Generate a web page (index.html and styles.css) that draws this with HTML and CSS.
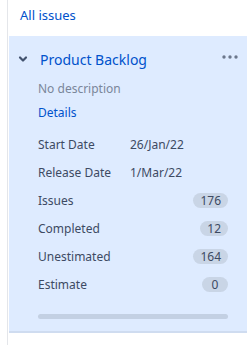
FILE: index.html
```html
<!DOCTYPE html>
<html lang="en">
<head>
  <meta charset="UTF-8" />
  <title>Backlog</title>
  <link rel="stylesheet" href="styles.css">
</head>
<body>
  <div class="sidebar">
    <div class="all-issues">All issues</div>

    <div class="version">
      <div class="version-head">
        <svg class="chevron" width="10" height="10" viewBox="0 0 10 10">
          <path d="M2 3.5 L5 6.5 L8 3.5" fill="none" stroke="#42526e" stroke-width="2.2" stroke-linecap="round" stroke-linejoin="round"/>
        </svg>
        <span class="version-name">Product Backlog</span>
        <svg class="more" width="16" height="4" viewBox="0 0 16 4">
          <circle cx="2" cy="2" r="1.7" fill="#6b778c"/>
          <circle cx="8" cy="2" r="1.7" fill="#6b778c"/>
          <circle cx="14" cy="2" r="1.7" fill="#6b778c"/>
        </svg>
      </div>

      <div class="version-body">
        <div class="desc">No description</div>
        <div class="details">Details</div>

        <div class="stats">
          <div class="row"><span class="label">Start Date</span><span class="value">26/Jan/22</span></div>
          <div class="row"><span class="label">Release Date</span><span class="value">1/Mar/22</span></div>
          <div class="row"><span class="label">Issues</span><span class="badge">176</span></div>
          <div class="row"><span class="label">Completed</span><span class="badge">12</span></div>
          <div class="row"><span class="label">Unestimated</span><span class="badge">164</span></div>
          <div class="row"><span class="label">Estimate</span><span class="badge">0</span></div>
        </div>

        <div class="progress"></div>
      </div>
    </div>
  </div>
</body>
</html>
```

FILE: styles.css
```css
:root {
  --panel: #deebff;
  --link: #0052cc;
  --muted: #7a869a;
  --text: #3d4a63;
  --badge: #c9d5e6;
}

* {
  box-sizing: border-box;
}

body {
  margin: 0;
  background: #fff;
  font-family: 'Noto Sans', 'Open Sans', sans-serif;
  color: var(--text);
}

.sidebar {
  margin-left: 7px;
  height: 345px;
  border-left: 1px solid #e4e6ea;
}

.all-issues {
  height: 36px;
  line-height: 30px;
  padding-left: 12px;
  font-size: 13px;
  color: var(--link);
}

.version {
  margin-left: 1px;
  background: var(--panel);
  border-bottom: 2px solid #cfdcf0;
  padding: 12px 19px 12px 0;
}

.version-head {
  display: flex;
  align-items: center;
  height: 22px;
}

.chevron {
  margin-left: 9px;
  margin-right: 12px;
}

.version-name {
  flex: 1;
  font-size: 14px;
  color: var(--link);
}

.more {
  margin-right: -10px;
  margin-top: -4px;
}

.version-body {
  padding-left: 29px;
}

.desc {
  margin-top: 9px;
  line-height: 20px;
  font-size: 12px;
  color: var(--muted);
}

.details {
  margin-top: 4px;
  line-height: 20px;
  font-size: 12px;
  color: var(--link);
}

.stats {
  margin-top: 7px;
}

.row {
  display: flex;
  align-items: center;
  height: 28px;
  font-size: 12px;
}

.label {
  width: 92px;
}

.value {
  flex: 1;
}

.badge {
  margin-left: auto;
  min-width: 26px;
  padding: 0 7px;
  height: 15px;
  line-height: 15px;
  border-radius: 8px;
  background: var(--badge);
  text-align: center;
  font-size: 12px;
}

.progress {
  margin-top: 16px;
  height: 5px;
  border-radius: 3px;
  background: #c3d0e3;
}
```
